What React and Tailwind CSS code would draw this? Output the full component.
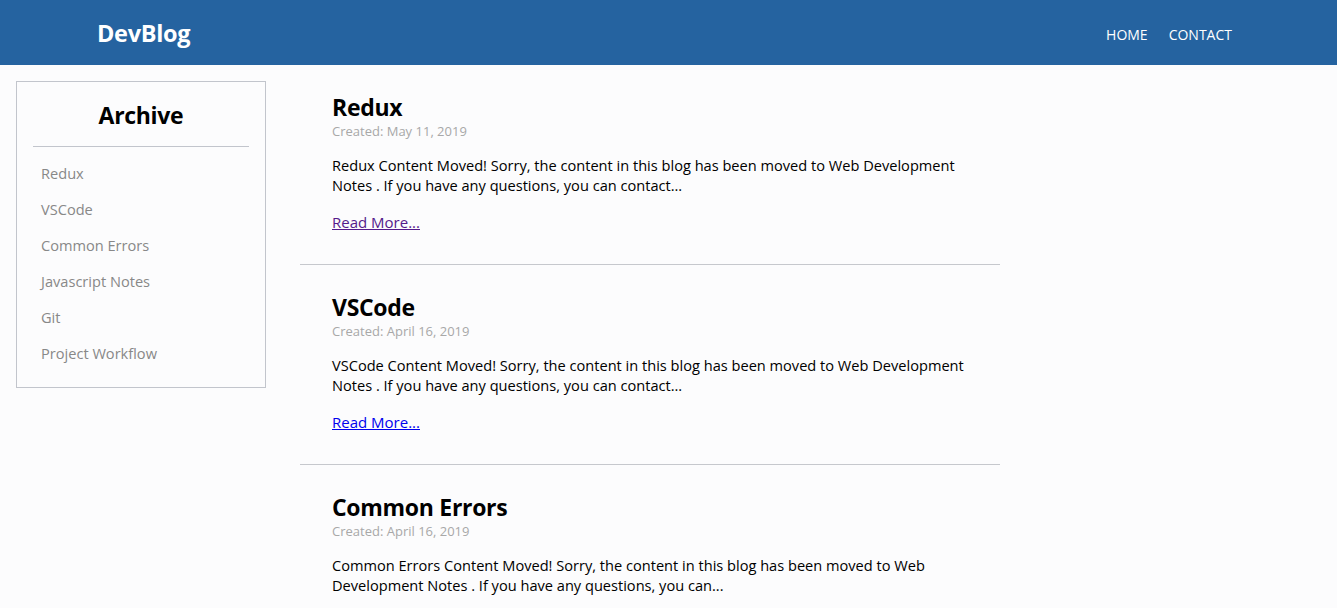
import React from "react";

const archive = ["Redux", "VSCode", "Common Errors", "Javascript Notes", "Git", "Project Workflow"];

const posts = [
  {
    title: "Redux",
    date: "Created: May 11, 2019",
    body: "Redux Content Moved! Sorry, the content in this blog has been moved to Web Development Notes . If you have any questions, you can contact...",
    visited: true,
  },
  {
    title: "VSCode",
    date: "Created: April 16, 2019",
    body: "VSCode Content Moved! Sorry, the content in this blog has been moved to Web Development Notes . If you have any questions, you can contact...",
    visited: false,
  },
  {
    title: "Common Errors",
    date: "Created: April 16, 2019",
    body: "Common Errors Content Moved! Sorry, the content in this blog has been moved to Web Development Notes . If you have any questions, you can...",
    visited: false,
  },
];

export default function App() {
  return (
    <div className="min-h-[608px] bg-[#fcfcfd] font-['Open_Sans',sans-serif] text-black">
      <header className="h-[65px] bg-[#2563a0] flex items-center justify-between pt-[3px] pl-[97px] pr-[105px]">
        <div className="text-white font-bold text-[23.5px] tracking-[-0.3px]">DevBlog</div>
        <nav className="flex gap-[21px] text-white text-[14px]">
          <a href="#">HOME</a>
          <a href="#">CONTACT</a>
        </nav>
      </header>
      <div className="flex items-start pt-[16px] pl-[16px]">
        <aside className="w-[250px] border border-[#c2c5cc] px-[16px] pt-[17px] pb-[8px]">
          <h2 className="text-center font-bold text-[23px] leading-[32px] tracking-[-0.3px]">Archive</h2>
          <hr className="mt-[15px] border-0 border-t border-[#c2c5cc]" />
          <ul className="pl-[8px] pt-[16px] text-[#888] text-[14.6px]">
            {archive.map((a) => (
              <li key={a} className="h-[36px] leading-[20px]">{a}</li>
            ))}
          </ul>
        </aside>
        <main className="ml-[34px] w-[700px]">
          {posts.map((p, i) => (
            <article key={p.title} className={`px-[32px] pb-[30px] ${i < posts.length - 1 ? "border-b border-[#c6c8cd]" : ""} ${i > 0 ? "pt-[26px]" : "pt-[10px]"}`}>
              <h1 className="font-bold text-[23px] leading-[32px] tracking-[-0.3px]">{p.title}</h1>
              <div className="-mt-[1px] text-[#a8a8a8] text-[13px] leading-[18px]">{p.date}</div>
              <p className="mt-[15px] text-[14.6px] leading-[20px]">{p.body}</p>
              <a href="#" className={`inline-block mt-[17px] text-[15px] leading-[20px] underline ${p.visited ? "text-[#551a8b]" : "text-[#0000ee]"}`}>Read More...</a>
            </article>
          ))}
        </main>
      </div>
    </div>
  );
}
